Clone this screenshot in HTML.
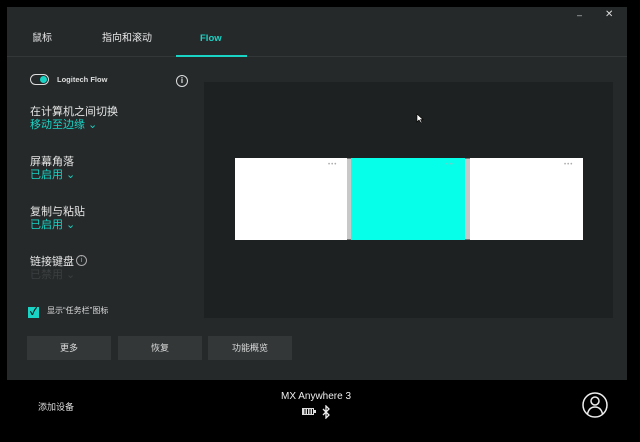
<!DOCTYPE html>
<html><head><meta charset="utf-8"><style>
*{margin:0;padding:0;box-sizing:border-box}
body{width:640px;height:442px;background:#000;position:relative;overflow:hidden;font-family:"Liberation Sans","Noto Sans CJK SC",sans-serif;color:#e8e8e8}
.a{position:absolute}
#panel{left:7px;top:7px;width:620px;height:373px;background:#25292a}
.tab{font-size:10px;top:33px;line-height:12px}
.lbl{font-size:11px;color:#e6e6e6}
.sub{font-size:11px;color:#19d3c5}
.btn{top:336px;width:84px;height:24px;background:#333738;font-size:9px;text-align:center;line-height:24px;color:#ddd}
</style></head><body>
<div id="panel" class="a"></div>
<div class="a" style="left:7px;top:56px;width:620px;height:1px;background:#333738"></div>
<div class="a tab" style="left:32px">鼠标</div>
<div class="a tab" style="left:102px">指向和滚动</div>
<div class="a tab" style="left:200px;color:#19d3c5;font-weight:bold;font-size:9.5px">Flow</div>
<div class="a" style="left:176px;top:55px;width:71px;height:2px;background:#19d3c5"></div>
<div class="a" style="left:577px;top:10px;font-size:9px;color:#ccc">–</div>
<div class="a" style="left:605px;top:9px;font-size:10px;color:#ddd">✕</div>
<!-- toggle -->
<div class="a" style="left:30px;top:74px;width:19px;height:11px;border:1.5px solid #ddd;border-radius:6px"></div>
<div class="a" style="left:40px;top:76px;width:7px;height:7px;border-radius:50%;background:#19d3c5"></div>
<div class="a" style="left:57px;top:75px;font-size:7.5px;font-weight:bold;color:#ddd">Logitech Flow</div>
<div class="a" style="left:176px;top:75px;width:12px;height:12px;border:1.3px solid #ddd;border-radius:50%;font-size:8px;text-align:center;line-height:10px;font-weight:bold">i</div>
<div class="a lbl" style="left:30px;top:103px">在计算机之间切换</div>
<div class="a sub" style="left:30px;top:116px">移动至边缘 ⌄</div>
<div class="a lbl" style="left:30px;top:153px">屏幕角落</div>
<div class="a sub" style="left:30px;top:166px">已启用 ⌄</div>
<div class="a lbl" style="left:30px;top:203px">复制与粘贴</div>
<div class="a sub" style="left:30px;top:216px">已启用 ⌄</div>
<div class="a lbl" style="left:30px;top:253px">链接键盘</div>
<div class="a" style="left:76px;top:255px;width:11px;height:11px;border:1px solid #aaa;border-radius:50%;font-size:7px;text-align:center;line-height:9px;color:#aaa">i</div>
<div class="a" style="left:30px;top:266px;font-size:11px;color:#3b3f40">已禁用 ⌄</div>
<div class="a" style="left:28px;top:307px;width:11px;height:11px;background:#19d3c5;color:#111;font-size:10px;line-height:11px;text-align:center;font-weight:bold">✓</div>
<div class="a" style="left:47px;top:305px;font-size:8px;color:#ddd">显示“任务栏”图标</div>
<!-- preview -->
<div class="a" style="left:204px;top:82px;width:409px;height:236px;background:#1e2121"></div>
<div class="a" style="left:235px;top:158px;width:348px;height:82px;background:#c8c8c8;border:1px solid #777"></div>
<div class="a" style="left:235px;top:158px;width:112px;height:82px;background:#fff"></div>
<div class="a" style="left:351px;top:158px;width:114px;height:82px;background:#05ffe8"></div>
<div class="a" style="left:470px;top:158px;width:113px;height:82px;background:#fff"></div>
<div class="a" style="left:328px;top:162px;font-size:6px;color:#aaa;letter-spacing:1px">•••</div>
<div class="a" style="left:446px;top:162px;font-size:6px;color:#7cc;letter-spacing:1px">•••</div>
<div class="a" style="left:564px;top:162px;font-size:6px;color:#aaa;letter-spacing:1px">•••</div>
<svg class="a" style="left:416px;top:113px" width="8" height="11"><path d="M1 1V9L3 7L5 10L6 9.5L4.5 6.5H7Z" fill="#fff" stroke="#000" stroke-width=".6"/></svg>
<div class="a btn" style="left:27px">更多</div>
<div class="a btn" style="left:118px">恢复</div>
<div class="a btn" style="left:208px">功能概览</div>
<!-- bottom -->
<div class="a" style="left:38px;top:400px;font-size:9px;color:#ddd">添加设备</div>
<div class="a" style="left:281px;top:391px;font-size:10px;color:#eee">MX Anywhere 3</div>
<div class="a" style="left:302px;top:408px;width:12px;height:7px;border:1.2px solid #ddd;background:repeating-linear-gradient(90deg,#ddd 0 1.5px,#000 1.5px 2.5px)"></div>
<div class="a" style="left:314px;top:410px;width:1.5px;height:3px;background:#ddd"></div>
<svg class="a" style="left:322px;top:405px" width="8" height="14"><path d="M1 4L7 10L4 13V1L7 4L1 10" fill="none" stroke="#eee" stroke-width="1.3"/></svg>
<svg class="a" style="left:581px;top:391px" width="28" height="28"><circle cx="14" cy="14" r="12" fill="none" stroke="#eee" stroke-width="1.5"/><circle cx="14" cy="10" r="4" fill="none" stroke="#eee" stroke-width="1.5"/><path d="M6.5 23Q8 16 14 16Q20 16 21.5 23" fill="none" stroke="#eee" stroke-width="1.5"/></svg>
</body></html>
